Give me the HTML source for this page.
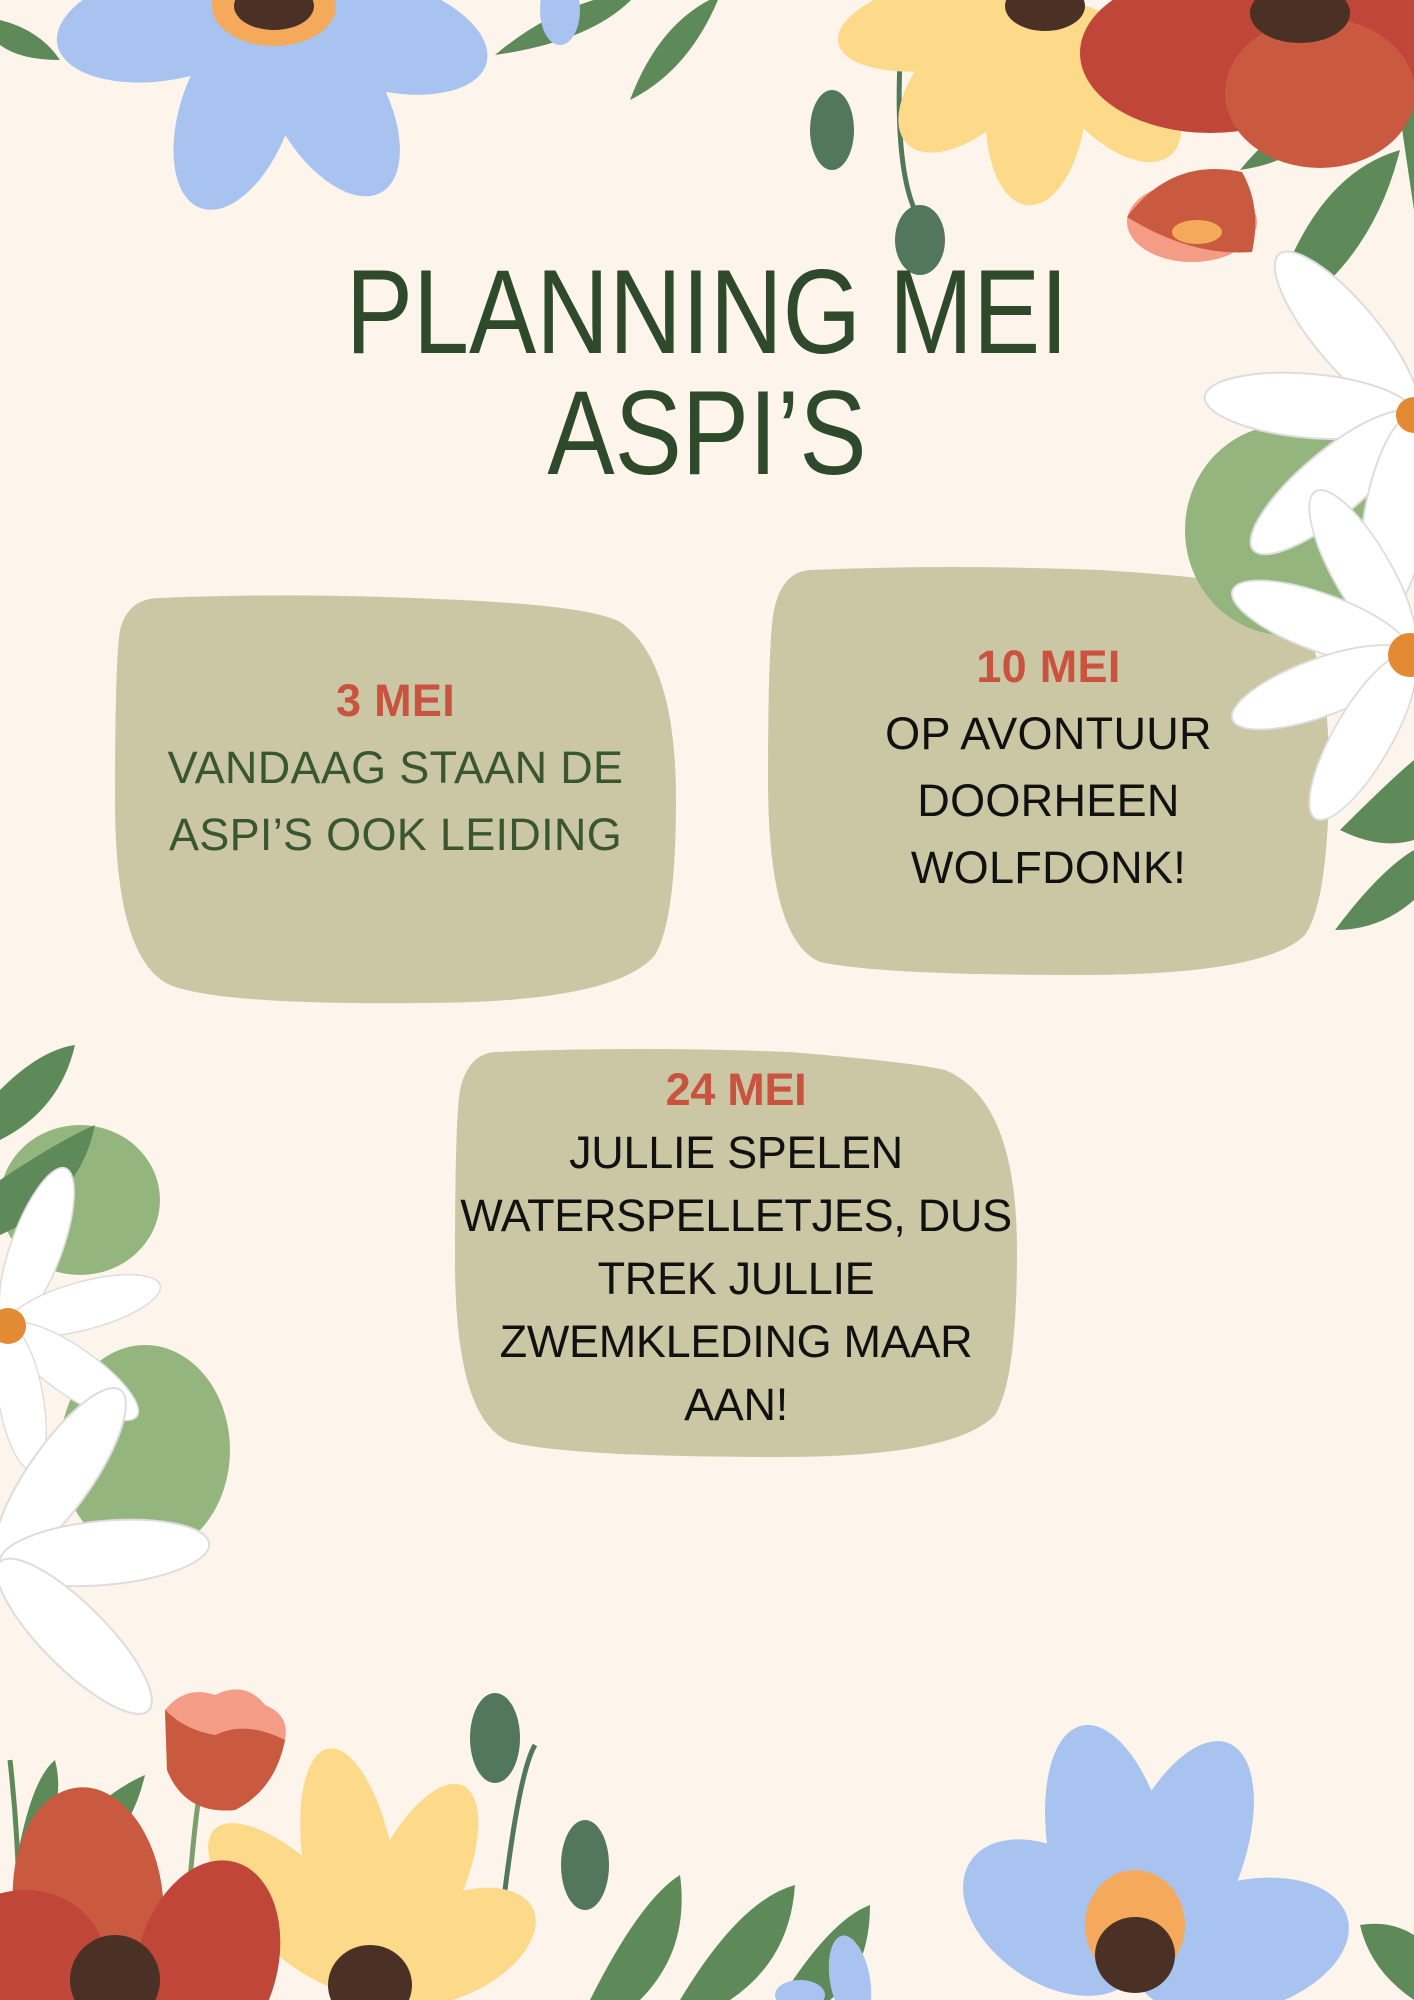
<!DOCTYPE html>
<html><head><meta charset="utf-8"><style>
html,body{margin:0;padding:0}
body{width:1414px;height:2000px;background:#fdf4ec;position:relative;overflow:hidden;font-family:"Liberation Sans",sans-serif}
svg.bg{position:absolute;left:0;top:0}
.title{position:absolute;left:0;width:1414px;text-align:center;color:#2f4a2b;font-size:120px;line-height:120px;transform-origin:center}
.t{position:absolute;text-align:center;font-size:45px;line-height:67px;letter-spacing:0.3px}
.r{color:#c9533e;font-weight:bold}
</style></head><body>
<svg class="bg" width="1414" height="2000" viewBox="0 0 1414 2000">
<defs>
<g id="daisy">
<ellipse cx="0" cy="-105" rx="32" ry="105" fill="#fff" stroke="#ddd" stroke-width="2"/>
</g>
</defs>
<!-- boxes -->
<path d="M160,598 Q300,592 460,600 Q590,606 620,622 Q676,660 676,800 Q676,920 655,955 Q615,1003 420,1003 Q220,1005 170,985 Q115,960 115,800 Q115,660 120,630 Q128,598 160,598Z" fill="#cbc7a4"/>
<path d="M810,570 Q950,564 1100,570 Q1230,578 1270,590 Q1329,620 1329,770 Q1329,900 1305,935 Q1265,975 1080,975 Q880,975 820,962 Q768,940 768,780 Q768,640 774,610 Q782,572 810,570Z" fill="#cbc7a4"/>
<path d="M495,1052 Q640,1046 790,1052 Q910,1062 945,1070 Q1017,1100 1017,1250 Q1017,1380 995,1415 Q955,1457 780,1457 Q570,1457 510,1442 Q455,1420 455,1260 Q455,1120 460,1090 Q468,1054 495,1052Z" fill="#cbc7a4"/>
<!-- top-left leaves -->
<path d="M0,20 Q40,30 60,60 Q20,60 0,45Z" fill="#5e8a5a"/>
<path d="M495,55 Q560,0 640,-10 Q600,40 495,55Z" fill="#5e8a5a"/>
<path d="M630,100 Q660,20 720,-5 Q690,70 630,100Z" fill="#5e8a5a"/>
<!-- blue flower top-left -->
<g transform="translate(274,6)" fill="#a8c3f0">
<ellipse cx="0" cy="110" rx="55" ry="105" transform="rotate(20)"/>
<ellipse cx="0" cy="110" rx="55" ry="105" transform="rotate(-30)"/>
<ellipse cx="0" cy="110" rx="55" ry="110" transform="rotate(-75)"/>
<ellipse cx="0" cy="110" rx="55" ry="110" transform="rotate(80)"/>
<ellipse cx="0" cy="110" rx="45" ry="60" transform="rotate(120)"/>
<ellipse cx="0" cy="0" rx="62" ry="40" fill="#f5a95a"/>
<ellipse cx="0" cy="0" rx="40" ry="24" fill="#4a3025"/>
</g>
<ellipse cx="560" cy="10" rx="20" ry="35" fill="#a8c3f0"/>
<!-- buds -->
<ellipse cx="832" cy="130" rx="22" ry="40" fill="#52775a"/>
<path d="M900,60 Q895,180 920,220" stroke="#52775a" stroke-width="5" fill="none"/>
<ellipse cx="920" cy="240" rx="25" ry="35" fill="#52775a"/>
<!-- yellow flower top -->
<g transform="translate(1045,6)" fill="#fdd98a">
<ellipse cx="0" cy="100" rx="50" ry="100" transform="rotate(5)"/>
<ellipse cx="0" cy="100" rx="50" ry="95" transform="rotate(45)"/>
<ellipse cx="0" cy="100" rx="50" ry="95" transform="rotate(-40)"/>
<ellipse cx="0" cy="100" rx="45" ry="110" transform="rotate(80)"/>
<ellipse cx="0" cy="0" rx="40" ry="25" fill="#4a3025"/>
</g>
<!-- red flower top-right -->
<path d="M1240,170 Q1280,120 1330,110 Q1310,160 1240,170Z" fill="#5e8a5a"/>
<path d="M1290,260 Q1330,170 1400,150 Q1380,230 1330,280Z" fill="#5e8a5a"/>
<path d="M1395,80 Q1405,150 1414,210 L1414,80Z" fill="#5e8a5a"/>
<g transform="translate(1300,13)">
<ellipse cx="-90" cy="40" rx="130" ry="80" fill="#c0463a"/>
<ellipse cx="90" cy="20" rx="120" ry="70" fill="#c0463a"/>
<ellipse cx="20" cy="80" rx="95" ry="75" fill="#c95a40"/>
<ellipse cx="0" cy="0" rx="50" ry="30" fill="#4a3025"/>
</g>
<!-- small red tulip -->
<g transform="translate(1192,217)">
<ellipse cx="0" cy="5" rx="65" ry="40" fill="#f59c86"/>
<path d="M-65,0 Q-20,-60 50,-45 Q70,-10 60,35 Q0,40 -65,0Z" fill="#c95a40"/>
<ellipse cx="5" cy="15" rx="25" ry="12" fill="#f5a95a"/>
</g>
<!-- right green leaf blob -->
<ellipse cx="1285" cy="530" rx="100" ry="105" fill="#95b57e"/>
<path d="M1340,830 Q1390,780 1414,760 L1414,840 Q1380,850 1340,830Z" fill="#5e8a5a"/>
<path d="M1335,930 Q1380,870 1414,850 L1414,900 Q1380,930 1335,930Z" fill="#5e8a5a"/>
<!-- right daisy 1 -->
<g transform="translate(1414,415)">
<use href="#daisy" transform="rotate(-40)"/>
<use href="#daisy" transform="rotate(-85)"/>
<use href="#daisy" transform="rotate(-130)"/>
<use href="#daisy" transform="rotate(-170)"/>
<circle r="18" fill="#e38b34"/>
</g>
<!-- right daisy 2 -->
<g transform="translate(1410,655)">
<use href="#daisy" transform="rotate(-30) scale(.9)"/>
<use href="#daisy" transform="rotate(-70) scale(.9)"/>
<use href="#daisy" transform="rotate(-110) scale(.9)"/>
<use href="#daisy" transform="rotate(-150) scale(.9)"/>
<circle r="22" fill="#e38b34"/>
</g>
<!-- left middle -->
<path d="M0,1090 Q40,1050 75,1045 Q60,1110 0,1140Z" fill="#5e8a5a"/>
<ellipse cx="80" cy="1200" rx="80" ry="75" fill="#95b57e"/>
<path d="M0,1180 Q60,1140 95,1125 Q80,1200 0,1235Z" fill="#5e8a5a"/>
<ellipse cx="145" cy="1450" rx="85" ry="105" fill="#95b57e"/>
<g transform="translate(8,1326)">
<use href="#daisy" transform="rotate(20) scale(.8)"/>
<use href="#daisy" transform="rotate(75) scale(.75)"/>
<use href="#daisy" transform="rotate(125) scale(.75)"/>
<use href="#daisy" transform="rotate(170) scale(.7)"/>
<circle r="18" fill="#e38b34"/>
</g>
<g transform="translate(0,1562)">
<use href="#daisy" transform="rotate(35)"/>
<use href="#daisy" transform="rotate(85)"/>
<use href="#daisy" transform="rotate(135)"/>
</g>
<!-- bottom -->
<path d="M10,1760 Q20,1850 20,1950" stroke="#5e8a5a" stroke-width="5" fill="none"/>
<path d="M15,1870 Q30,1780 55,1760 Q70,1820 15,1870Z" fill="#5e8a5a"/>
<path d="M70,1830 Q110,1790 145,1775 Q130,1840 80,1870Z" fill="#5e8a5a"/>
<path d="M190,1880 Q195,1820 200,1790" stroke="#7ba06d" stroke-width="5" fill="none"/>
<g transform="translate(225,1760)">
<path d="M-60,-50 Q-40,-75 -10,-65 Q20,-80 40,-55 Q65,-45 60,-20 Q50,30 10,50 Q-40,55 -58,10Z" fill="#f59c86"/>
<path d="M-60,-50 Q-40,-30 -10,-25 Q20,-40 60,-20 Q50,30 10,50 Q-40,55 -58,10Z" fill="#c95a40"/>
</g>
<path d="M505,1890 Q520,1770 535,1745" stroke="#52775a" stroke-width="5" fill="none"/>
<ellipse cx="495" cy="1738" rx="25" ry="45" fill="#52775a"/>
<ellipse cx="585" cy="1865" rx="24" ry="45" fill="#52775a"/>
<path d="M590,2000 Q640,1900 680,1875 Q690,1950 640,2000Z" fill="#5e8a5a"/>
<path d="M680,2000 Q740,1900 795,1885 Q790,1960 730,2000Z" fill="#5e8a5a"/>
<path d="M780,2000 Q830,1920 870,1905 Q870,1970 830,2000Z" fill="#5e8a5a"/>
<path d="M1360,1925 Q1390,1920 1414,1935 L1414,2000 Q1370,1970 1360,1925Z" fill="#5e8a5a"/>
<!-- bottom yellow -->
<g transform="translate(370,1985)" fill="#fdd98a">
<ellipse cx="0" cy="-120" rx="45" ry="120" transform="rotate(-10)"/>
<ellipse cx="0" cy="-110" rx="45" ry="110" transform="rotate(25)"/>
<ellipse cx="0" cy="-110" rx="45" ry="110" transform="rotate(-45)"/>
<ellipse cx="0" cy="-90" rx="50" ry="90" transform="rotate(65)"/>
<ellipse cx="0" cy="0" rx="42" ry="40" fill="#4a3025"/>
</g>
<!-- bottom red -->
<g transform="translate(115,1980)">
<ellipse cx="-20" cy="-80" rx="75" ry="115" fill="#c95a40" transform="rotate(-5)"/>
<ellipse cx="85" cy="-40" rx="70" ry="105" fill="#c0463a" transform="rotate(15)"/>
<ellipse cx="-90" cy="-20" rx="80" ry="70" fill="#c0463a"/>
<ellipse cx="0" cy="0" rx="45" ry="45" fill="#4a3025"/>
</g>
<!-- bottom blue -->
<g transform="translate(1135,1975)" fill="#a8c3f0">
<ellipse cx="0" cy="-120" rx="60" ry="135" transform="rotate(-12)"/>
<ellipse cx="0" cy="-120" rx="60" ry="130" transform="rotate(22)"/>
<ellipse cx="0" cy="-100" rx="65" ry="100" transform="rotate(-55)"/>
<ellipse cx="0" cy="-110" rx="65" ry="110" transform="rotate(75)"/>
<ellipse cx="0" cy="-50" rx="50" ry="55" fill="#f5a95a"/>
<ellipse cx="0" cy="-20" rx="40" ry="38" fill="#4a3025"/>
</g>
<ellipse cx="850" cy="1980" rx="20" ry="45" fill="#a8c3f0" transform="rotate(-10 850 1980)"/>
<ellipse cx="800" cy="1995" rx="25" ry="15" fill="#a8c3f0"/>
</svg>
<div class="title" style="top:252px;transform:scaleX(.84)">PLANNING MEI</div>
<div class="title" style="top:373px;transform:scaleX(.84)">ASPI’S</div>
<div class="t" style="left:115px;width:561px;top:667px;color:#3a5532"><span class="r">3 MEI</span><br>VANDAAG STAAN DE<br>ASPI’S OOK LEIDING</div>
<div class="t" style="left:768px;width:561px;top:633px;color:#111"><span class="r">10 MEI</span><br>OP AVONTUUR<br>DOORHEEN<br>WOLFDONK!</div>
<div class="t" style="left:445px;width:582px;top:1058px;line-height:63px;color:#111;letter-spacing:-0.3px"><span class="r">24 MEI</span><br>JULLIE SPELEN<br>WATERSPELLETJES, DUS<br>TREK JULLIE<br>ZWEMKLEDING MAAR<br>AAN!</div>
</body></html>
